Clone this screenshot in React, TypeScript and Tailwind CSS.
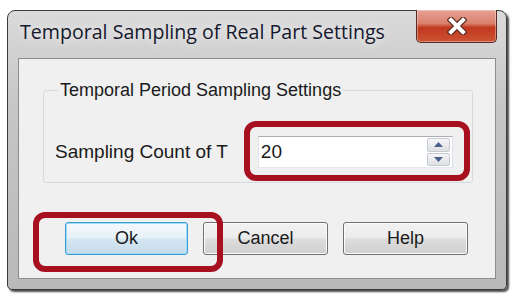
const uiFont = { fontFamily: '"Liberation Sans", Arial, sans-serif' };

export default function App() {
  return (
    <div className="h-[301px] w-[517px] overflow-hidden bg-white pl-[7px] pt-[10px]">
      {/* Window frame */}
      <div className="flex h-[280px] w-[500px] flex-col rounded-t-[8px] rounded-b-[5px] border border-[#3a3a3a] bg-[linear-gradient(to_bottom,#dadada,#c6c6c6_35%,#b9b9b9)] px-[10px] pb-[10px] shadow-[2px_2px_2px_rgba(0,0,0,0.7)]">
        {/* Title bar */}
        <div className="flex h-[47px] shrink-0 items-start justify-between">
          <span
            className="ml-[2px] mt-[9px] text-[19.6px] leading-[24px] text-[#15182e] [text-shadow:0_0_10px_rgba(255,255,255,0.95)]"
            style={{ fontFamily: '"Open Sans", "Noto Sans", sans-serif' }}
          >
            Temporal Sampling of Real Part Settings
          </span>
          <CloseButton />
        </div>

        {/* Client area */}
        <div className="flex-1 border border-[#8c8c8c] bg-[#f0f0f0] text-[#1a1a1a]" style={uiFont}>
          <fieldset className="ml-[24px] mt-[21px] h-[103px] w-[430px] rounded-[3px] border border-[#d3dbe0] px-[11px]">
            <legend className="ml-[3px] px-[2px] text-[18px] leading-[20px]">
              Temporal Period Sampling Settings
            </legend>
            <div className="mt-[36px] flex items-center">
              <span className="text-[19px] leading-[22px]">Sampling Count of T</span>
              <div className="relative ml-[30px]">
                <SpinBox value="20" />
                <div className="pointer-events-none absolute -bottom-[13px] -left-[14px] -right-[17px] -top-[15px] rounded-[12px] border-[6px] border-[#a6101f]" />
              </div>
            </div>
          </fieldset>

          <div className="ml-[46px] mt-[39px] flex gap-[15px]">
            <div className="relative">
              <WinButton label="Ok" focused />
              <div className="pointer-events-none absolute -bottom-[17px] -left-[32px] -right-[35px] -top-[10px] rounded-[12px] border-[6px] border-[#a6101f]" />
            </div>
            <WinButton label="Cancel" />
            <WinButton label="Help" />
          </div>
        </div>
      </div>
    </div>
  );
}

function CloseButton() {
  return (
    <div className="-mr-[1px] -mt-[1px] flex h-[33px] w-[81px] items-center justify-center rounded-b-[5px] border border-t-0 border-[#5a2a22] bg-[linear-gradient(to_bottom,#e8a294_0%,#d9806d_42%,#c2391f_55%,#cc5233_100%)] shadow-[inset_0_0_0_1px_rgba(255,255,255,0.35)]">
      <svg width="20" height="18" viewBox="0 0 20 18">
        <path d="M4 3 L16 15 M16 3 L4 15" stroke="#5b2a20" strokeWidth="6.5" strokeLinecap="square" />
        <path d="M4 3 L16 15 M16 3 L4 15" stroke="#ffffff" strokeWidth="4" strokeLinecap="square" />
      </svg>
    </div>
  );
}

function SpinArrow({ up }: { up?: boolean }) {
  return (
    <svg width="9" height="5" viewBox="0 0 9 5">
      <path d={up ? "M0 5 L4.5 0 L9 5 Z" : "M0 0 L9 0 L4.5 5 Z"} fill="#4a5f8f" />
    </svg>
  );
}

function SpinBox({ value }: { value: string }) {
  return (
    <div className="flex h-[32px] w-[195px] items-center border border-[#abadb3] border-l-[#e2e3ea] border-r-[#dbdfe6] border-b-[#e3e9ef] bg-white pl-[2px] pr-[2px]">
      <span className="flex-1 text-[19px] leading-[22px] text-[#1a1a1a]">{value}</span>
      <div className="flex h-[28px] w-[23px] flex-col gap-[1px]">
        <div className="flex flex-1 items-center justify-center rounded-[2px] border border-[#c6cbd3] bg-[linear-gradient(to_bottom,#f6f6f6,#dedfe3)]">
          <SpinArrow up />
        </div>
        <div className="flex flex-1 items-center justify-center rounded-[2px] border border-[#c6cbd3] bg-[linear-gradient(to_bottom,#f6f6f6,#dedfe3)]">
          <SpinArrow />
        </div>
      </div>
    </div>
  );
}

function WinButton({ label, focused }: { label: string; focused?: boolean }) {
  return (
    <div
      className={
        focused
          ? "flex h-[33px] w-[123px] items-center justify-center rounded-[3px] border border-[#3a9ad6] bg-[linear-gradient(to_bottom,#f4f9fc_0%,#e6f1f8_48%,#d4e6f2_52%,#c7dcea_100%)] text-[18px] shadow-[inset_0_0_0_1px_#9fdcf6]"
          : "flex h-[33px] w-[125px] items-center justify-center rounded-[3px] border border-[#707070] bg-[linear-gradient(to_bottom,#f2f2f2_0%,#ebebeb_48%,#dddddd_52%,#cfcfcf_100%)] text-[18px] shadow-[inset_0_0_0_1px_#fcfcfc]"
      }
    >
      {label}
    </div>
  );
}
